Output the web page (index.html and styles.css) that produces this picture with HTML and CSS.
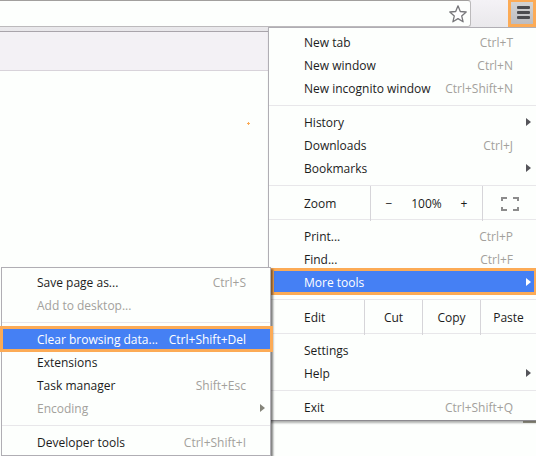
FILE: index.html
```html
<!DOCTYPE html>
<html lang="en">
<head>
<meta charset="utf-8">
<title>Browser menu</title>
<link rel="stylesheet" href="styles.css">
</head>
<body>
<header class="toolbar">
  <div class="omnibox">
    <input class="omnibox-input" type="text" aria-label="Address">
    <button class="star" type="button" aria-label="Bookmark this page">
      <svg width="20" height="20" viewBox="0 0 20 20"><path d="M10 1.800 12.300 7.500 18.200 8 13.700 11.900 15.100 17.800 10 14.600 4.900 17.800 6.300 11.900 1.800 8 7.700 7.500Z" fill="#fff" stroke="#77777a" stroke-width="1.300" stroke-linejoin="round"/></svg>
    </button>
  </div>
  <button class="menu-button" type="button" aria-label="Menu">
    <svg width="14" height="14" viewBox="0 0 14 14" fill="#4c4c50"><rect y="0" width="13" height="3" rx="1"/><rect y="5" width="13" height="3" rx="1"/><rect y="10" width="13" height="3" rx="1"/></svg>
  </button>
</header>
<div class="bookmarks-bar"></div>
<main class="page">
  <svg class="mark" width="3" height="3" viewBox="0 0 3 3"><path d="M1 0h1v1h1v1H2v1H1V2H0V1h1z" fill="#fcab56"/></svg>
  <span class="corner"></span>
</main>

<ul class="menu main-menu">
  <li><button class="item" type="button">New tab<kbd>Ctrl+T</kbd></button></li>
  <li><button class="item" type="button">New window<kbd>Ctrl+N</kbd></button></li>
  <li><button class="item" type="button">New incognito window<kbd>Ctrl+Shift+N</kbd></button></li>
  <li class="separator"></li>
  <li><button class="item has-sub" type="button">History</button></li>
  <li><button class="item" type="button">Downloads<kbd>Ctrl+J</kbd></button></li>
  <li><button class="item has-sub" type="button">Bookmarks</button></li>
  <li class="tools zoom">
    <span class="tools-label">Zoom</span>
    <div class="stepper">
      <button type="button" aria-label="Zoom out">−</button>
      <span>100%</span>
      <button type="button" aria-label="Zoom in">+</button>
    </div>
    <button class="cell" type="button" aria-label="Full screen">
      <svg width="18" height="14" viewBox="0 0 18 14" fill="none" stroke="#8c8c8c" stroke-width="2"><path d="M1 4V1h5M12 1h5v3M17 10v3h-5M6 13H1v-3"/></svg>
    </button>
  </li>
  <li><button class="item" type="button">Print...<kbd>Ctrl+P</kbd></button></li>
  <li><button class="item" type="button">Find...<kbd>Ctrl+F</kbd></button></li>
  <li class="parent">
    <button class="item has-sub active" type="button">More tools</button>
    <ul class="menu sub-menu">
      <li><button class="item" type="button">Save page as...<kbd>Ctrl+S</kbd></button></li>
      <li><button class="item" type="button" disabled>Add to desktop...</button></li>
      <li class="separator"></li>
      <li><button class="item active" type="button">Clear browsing data...<kbd>Ctrl+Shift+Del</kbd></button></li>
      <li><button class="item" type="button">Extensions</button></li>
      <li><button class="item" type="button">Task manager<kbd>Shift+Esc</kbd></button></li>
      <li><button class="item has-sub" type="button" disabled>Encoding</button></li>
      <li class="separator"></li>
      <li><button class="item" type="button">Developer tools<kbd>Ctrl+Shift+I</kbd></button></li>
    </ul>
  </li>
  <li class="tools edit">
    <span class="tools-label">Edit</span>
    <button class="cell" type="button">Cut</button>
    <button class="cell" type="button">Copy</button>
    <button class="cell" type="button">Paste</button>
  </li>
  <li><button class="item" type="button">Settings</button></li>
  <li><button class="item has-sub" type="button">Help</button></li>
  <li class="separator"></li>
  <li><button class="item" type="button">Exit<kbd>Ctrl+Shift+Q</kbd></button></li>
</ul>
</body>
</html>
```
FILE: styles.css
```css
* {
  box-sizing: border-box;
}

body {
  margin: 0;
  min-height: 100vh;
  display: flex;
  flex-direction: column;
  background: #fdfffd;
  color: #1c1c1c;
  font: 12px/22px "Open Sans", "Noto Sans", sans-serif;
}

button,
input {
  margin: 0;
  padding: 0;
  border: 0;
  background: none;
  color: inherit;
  font: inherit;
}

button svg {
  display: block;
}

/* Browser chrome */
.toolbar {
  display: flex;
  height: 32px;
  padding-bottom: 4px;
  background: linear-gradient(#f4f2f6, #e8e7ea);
  border-bottom: 1px solid #a9a5ab;
}

.omnibox {
  flex: 1;
  display: flex;
  align-items: center;
  background: #fdfffd;
  border: 1px solid #bcbabc;
  border-top-color: #a2a09e;
  border-left: 0;
  border-radius: 0 3px 3px 0;
  margin-right: 37px;
  padding-right: 2px;
}

.omnibox-input {
  flex: 1;
  min-width: 0;
}

.menu-button {
  width: 28px;
  padding-left: 6px;
  background: linear-gradient(#d4d4d4, #bcbcc0);
  border: 3px solid #fcab56;
  border-top-width: 2px;
}

.bookmarks-bar {
  height: 39px;
  background: #f3f1f5;
  border-bottom: 1px solid #d8d3da;
}

.page {
  flex: 1;
  position: relative;
}

.mark {
  position: absolute;
  left: 247px;
  top: 51px;
}

.corner {
  position: absolute;
  right: 0;
  top: 350px;
  width: 13px;
  height: 2px;
  background: #a3a191;
}

/* Menus */
.menu {
  position: absolute;
  margin: 0;
  padding: 3px 0 1px;
  list-style: none;
  background: #fdfffd;
  border: 1px solid #b0aeb4;
}

.main-menu {
  top: 27px;
  right: 0;
  width: 268px;
  border-right: 0;
  border-bottom-color: #8d8b90;
  box-shadow: 1px 2px 2px #00000050;
}

.sub-menu {
  top: -4px;
  right: calc(100% - 2px);
  width: 270px;
  box-shadow: 2px 2px 2px #00000080;
}

.parent {
  position: relative;
}

.item {
  position: relative;
  z-index: 0;
  display: flex;
  justify-content: space-between;
  width: 100%;
  height: 23px;
  padding: 1px 23px 0 35px;
  text-align: left;
  white-space: nowrap;
}

kbd {
  color: #a3a19c;
  font: inherit;
}

.item:disabled {
  color: #a3a19c;
}

.has-sub::after {
  content: "";
  position: absolute;
  right: 5px;
  top: 7px;
  border: 4px solid transparent;
  border-left: 5px solid #55555a;
  border-right: 0;
}

.has-sub:disabled::after {
  border-left-color: #85857a;
}

.active,
.active kbd {
  color: #fff;
}

.active.has-sub::after {
  border-left-color: #fff;
}

.active::before {
  content: "";
  position: absolute;
  z-index: -1;
  inset: -3px -1px -1px 2px;
  background: #4580f4;
  border: 3px solid #fcab56;
}

.sub-menu .active::before {
  inset: -2px -3px -1px -2px;
}

.main-menu {
  overflow-x: visible;
}

.sub-menu .item {
  padding-right: 24px;
}

.separator {
  height: 1px;
  margin: 5px 0;
  background: #e8e7ea;
}

.tools {
  display: grid;
  height: 35px;
  margin: 5px 0;
  border: solid #e8e7ea;
  border-width: 1px 0;
}

.zoom {
  grid-template-columns: 101px 112px 1fr;
}

.edit {
  grid-template-columns: 95px 58px 58px 1fr;
}

.tools-label {
  padding-left: 35px;
  line-height: 35px;
}

.cell,
.stepper {
  border-left: 1px solid #d6d5d9;
}

.cell {
  display: flex;
  align-items: center;
  justify-content: center;
}

.stepper {
  display: grid;
  grid-template-columns: 36px 1fr 36px;
  align-items: center;
  text-align: center;
}
```
